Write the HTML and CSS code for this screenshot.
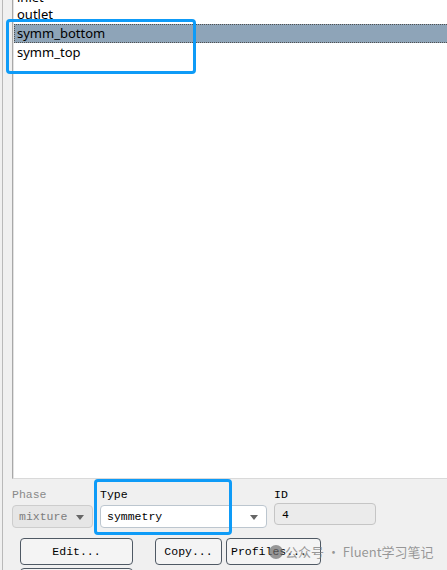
FILE: index.html
```html
<!DOCTYPE html>
<html lang="en">
<head>
    <meta charset="UTF-8">
    <title>Boundary Conditions</title>
    <link rel="stylesheet" href="styles.css">
</head>
<body>
    <div class="panel">
        <!-- Zone list, scrolled a little -->
        <div class="zone-list">
            <ul class="zones">
                <li>inlet</li>
                <li>outlet</li>
                <li class="selected">symm_bottom</li>
                <li>symm_top</li>
            </ul>
        </div>

        <div class="fields">
            <div class="field phase">
                <label class="disabled">Phase</label>
                <div class="combo disabled">mixture<span class="arrow"></span></div>
            </div>
            <div class="field type">
                <label>Type</label>
                <div class="combo">symmetry<span class="arrow"></span></div>
            </div>
            <div class="field id">
                <label>ID</label>
                <div class="idbox">4</div>
            </div>
        </div>

        <div class="buttons">
            <button class="btn edit">Edit...</button>
            <button class="btn copy">Copy...</button>
            <button class="btn profiles">Profiles...</button>
        </div>
        <div class="buttons">
            <button class="btn edit"></button>
        </div>
    </div>

    <!-- annotation boxes -->
    <div class="mark mark-list"></div>
    <div class="mark mark-type"></div>

    <div class="watermark">
        <span class="wm-icon"></span>
        <span>公众号 · Fluent学习笔记</span>
    </div>
</body>
</html>
```

FILE: styles.css
```css
body {
    margin: 0;
    width: 447px;
    height: 570px;
    overflow: hidden;
    background-color: #f0f0f0;
    font-family: "Liberation Mono", monospace;
    position: relative;
}

.panel {
    margin-left: 2px;
    height: 570px;
    border-left: 1px solid #b9b9b9;
    padding-left: 9px;
}

/* Zone list */
.zone-list {
    height: 478px;
    background: #fff;
    border-left: 1px solid #a8a8a8;
    border-bottom: 1px solid #d9d9d9;
    box-shadow: inset 1px 0 #e3e3e3;
    overflow: hidden;
}

.zones {
    list-style: none;
    margin: -12px 0 0 0;
    padding: 0 0 0 1px;
    font-family: "Noto Sans", sans-serif;
    font-size: 13px;
    color: #000;
}

.zones li {
    height: 19px;
    line-height: 19px;
    padding-left: 3px;
    box-sizing: border-box;
}

.zones li:first-child {
    height: 17px;
}

.zones li.selected {
    background: #8ea4b8;
    border: 1px dotted #505050;
    border-right: none;
    line-height: 17px;
    padding-left: 2px;
}

/* Fields */
.fields {
    display: flex;
    gap: 7px;
    margin-top: 9px;
    font-size: 11.5px;
}

.field label {
    display: block;
    height: 14px;
    line-height: 14px;
    margin-bottom: 3px;
    color: #000;
}

.field label.disabled {
    color: #8a8a8a;
}

.phase { width: 81px; }
.type { width: 167px; }
.id { width: 102px; }

.combo {
    position: relative;
    height: 23px;
    line-height: 22px;
    box-sizing: border-box;
    border: 1px solid #bcc6cf;
    border-radius: 4px;
    background: #fff;
    padding-left: 6px;
    color: #000;
}

.combo.disabled {
    background: #e6e6e6;
    border-color: #cdcdcd;
    color: #7c7c7c;
}

.arrow {
    position: absolute;
    right: 8px;
    top: 9px;
    width: 0;
    height: 0;
    border-left: 4px solid transparent;
    border-right: 4px solid transparent;
    border-top: 5px solid #666;
}

.id label {
    margin-bottom: 1px;
}

.idbox {
    height: 22px;
    line-height: 21px;
    box-sizing: border-box;
    border: 1px solid #c5c5c5;
    border-radius: 4px;
    background: #ebebeb;
    padding-left: 7px;
}

/* Buttons */
.buttons {
    display: flex;
    padding-left: 8px;
    margin-top: 10px;
}

.buttons + .buttons {
    margin-top: 3px;
}

.btn {
    height: 27px;
    box-sizing: border-box;
    border: 1px solid #4f5964;
    border-radius: 4px;
    background: #f4f4f4;
    font-family: "Liberation Mono", monospace;
    font-size: 11.5px;
    color: #000;
    padding: 0;
}

.edit { width: 113px; }
.copy { width: 67px; margin-left: 22px; }
.profiles { width: 95px; margin-left: 4px; text-align: left; padding-left: 4px; }

/* Annotations */
.mark {
    position: absolute;
    border: 3px solid #0e9bf7;
    border-radius: 4px;
    box-sizing: border-box;
}

.mark-list {
    left: 6px;
    top: 19px;
    width: 190px;
    height: 55px;
}

.mark-type {
    left: 94px;
    top: 479px;
    width: 138px;
    height: 56px;
}

.watermark {
    position: absolute;
    left: 269px;
    top: 542px;
    display: flex;
    align-items: center;
    gap: 2px;
    font-family: "Noto Sans CJK SC", sans-serif;
    font-size: 13px;
    color: rgba(120, 120, 120, 0.75);
}

.wm-icon {
    width: 14px;
    height: 14px;
    border-radius: 50%;
    background: rgba(110, 110, 110, 0.7);
}
```
